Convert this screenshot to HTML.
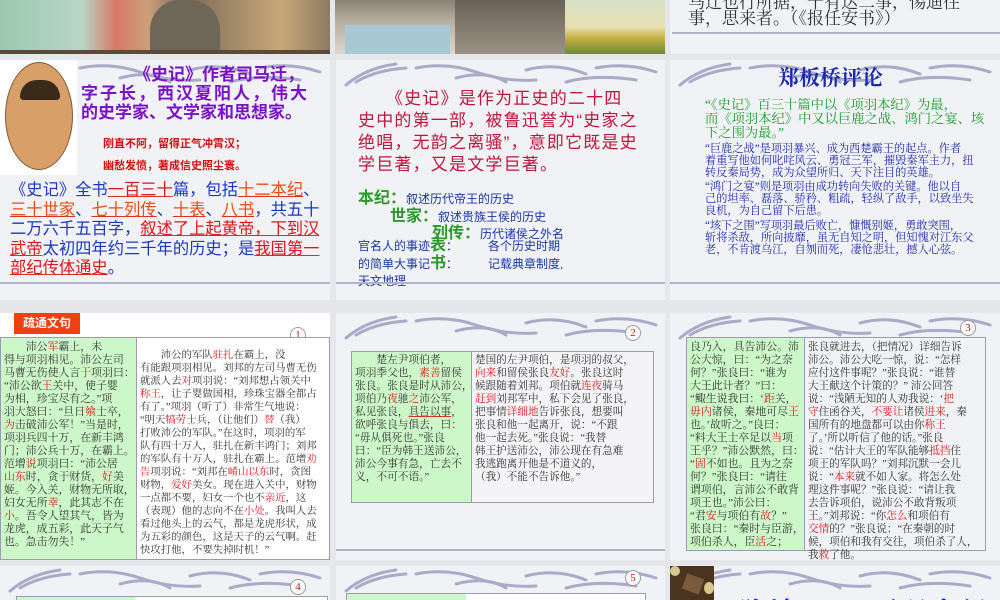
<!DOCTYPE html>
<html><head><meta charset="utf-8"><style>
*{margin:0;padding:0;box-sizing:border-box}
body{width:1000px;height:600px;overflow:hidden;background:#e6e7ea;position:relative;font-family:"Liberation Serif","Noto Serif CJK SC","Noto Sans CJK SC",serif}
.s{position:absolute;overflow:hidden;background:#f1f2f5}
.a{position:absolute;white-space:nowrap}
.k{font-family:"Liberation Sans","Noto Sans CJK SC",sans-serif}
.r{color:#e0141a}
.bx{position:absolute;border:1px solid #9a9ab0}
.t{position:absolute;white-space:nowrap;font-size:10.6px;line-height:13px;color:#333}
.c{position:absolute;width:16px;height:16px;border-radius:50%;border:1px solid #999;background:#fff;color:#d01010;font-size:11px;text-align:center;line-height:14px}
u{text-decoration-color:#e03020}
</style></head><body>
<svg width="0" height="0" style="position:absolute"><defs>
<g id="wv" fill="none" stroke="#a9abc9" stroke-width="3" stroke-linecap="round">
<path d="M10 25 Q30 8 60 4"/><path d="M20 22 Q40 10 70 8"/><path d="M80 8 Q110 2 140 12 T200 20"/><path d="M120 18 Q150 10 170 22"/><path d="M190 10 Q220 2 250 14"/><path d="M230 22 Q260 14 300 20"/><path d="M260 8 Q290 2 320 12"/>
</g></defs></svg>

<!-- row 1 -->
<div class="s" style="left:0;top:0;width:330px;height:54px;background:linear-gradient(90deg,#9cc8b0 0,#b8d6c4 25%,#d87868 35%,#caa07a 45%,#7a6a58 55%,#a08868 70%,#c8a878 85%,#8c7a62 100%)">
<div class="a" style="left:150px;top:0;width:70px;height:54px;background:#6e6656;border-radius:30px 30px 0 0"></div>
<div class="a" style="left:0;top:50px;width:330px;height:4px;background:#5a4a3a"></div></div>
<div class="s" style="left:335px;top:0;width:330px;height:54px;background:linear-gradient(#8a8274,#b8b0a0 40%,#ddd8cc)">
<div class="a" style="left:10px;top:25px;width:105px;height:29px;background:#a8c8d4"></div>
<div class="a" style="left:120px;top:0;width:110px;height:54px;background:linear-gradient(#6a6258,#9a9284)"></div>
<div class="a" style="left:230px;top:0;width:100px;height:54px;background:linear-gradient(#d8e0c8,#e8e0b0 50%,#c8b040 70%,#6a8a3a)"></div></div>
<div class="s" style="left:670px;top:0;width:330px;height:54px">
<div class="a" style="left:18px;top:-12px;font-size:17px;color:#333">马迁也行所据，十有达二事，惕迪往</div>
<div class="a" style="left:18px;top:4px;font-size:17px;color:#333">事，思来者。（《报任安书》）</div>
<div class="a" style="left:2px;top:32px;width:328px;height:2px;background:#b0b2cc"></div></div>

<!-- row 2 col1 -->
<div class="s" style="left:0;top:60px;width:330px;height:240px">
<svg class="a" style="left:0;top:0" width="330" height="30"><use href="#wv"/></svg>
<div class="a" style="left:0;top:0;width:77px;height:115px;background:#fff"></div>
<div class="a" style="left:5px;top:2px;width:68px;height:108px;border-radius:50%;background:#d8a068;border:1px solid #7a5a3a"></div>
<div class="a" style="left:20px;top:20px;width:40px;height:20px;border-radius:20px 20px 4px 4px;background:#3a2a1a"></div>
<div class="a k" style="left:134px;top:0px;font-size:17px;font-weight:bold;color:#7a10c8">《史记》作者司马迁，</div>
<div class="a k" style="left:81px;top:19px;font-size:17px;font-weight:bold;color:#7a10c8;letter-spacing:2px">字子长，西汉夏阳人，伟大</div>
<div class="a k" style="left:81px;top:38px;font-size:17px;font-weight:bold;color:#7a10c8">的史学家、文学家和思想家。</div>
<div class="a k" style="left:103px;top:75px;font-size:11px;font-weight:bold;color:#d01010">刚直不阿，留得正气冲霄汉；</div>
<div class="a k" style="left:103px;top:97px;font-size:11px;font-weight:bold;color:#d01010">幽愁发愤，著成信史照尘寰。</div>
<div class="a k" style="left:10px;top:121px;font-size:16.3px;color:#1836c8;line-height:19.5px">《史记》全书<u class="r">一百三十</u>篇，包括<u style="color:#f04a10">十二本纪</u>、<br><u style="color:#f04a10">三十世家</u>、<u style="color:#f04a10">七十列传</u>、<u style="color:#f04a10">十表</u>、<u style="color:#f04a10">八书</u>，共五十<br>二万六千五百字，<u class="r">叙述了上起黄帝，下到汉</u><br><u class="r">武帝</u>太初四年约三千年的历史；是<u class="r">我国第一</u><br><u class="r">部纪传体通史</u>。</div>
<div class="a" style="left:0;top:222px;width:330px;height:2px;background:#b0b2cc"></div></div>

<!-- row 2 col2 -->
<div class="s" style="left:336px;top:60px;width:329px;height:240px">
<svg class="a" style="left:0;top:0" width="330" height="30"><use href="#wv"/></svg>
<div class="a k" style="left:22px;top:28px;font-size:17px;color:#c0143c;line-height:22px;letter-spacing:1.2px">　　《史记》是作为正史的二十四<br>史中的第一部，被鲁迅誉为“史家之<br>绝唱，无韵之离骚”，意即它既是史<br>学巨著，又是文学巨著。</div>
<div class="a k" style="left:22px;top:124px;font-size:16px;font-weight:bold;color:#2a9a2a">本纪：<span style="font-size:12px;color:#1836a8;font-weight:normal">叙述历代帝王的历史</span></div>
<div class="a k" style="left:54px;top:142px;font-size:16px;font-weight:bold;color:#2a9a2a">世家：<span style="font-size:12px;color:#1836a8;font-weight:normal">叙述贵族王侯的历史</span></div>
<div class="a k" style="left:96px;top:159px;font-size:16px;font-weight:bold;color:#2a9a2a">列传：<span style="font-size:12px;color:#1836a8;font-weight:normal">历代诸侯之外名</span></div>
<div class="a k" style="left:22px;top:177px;font-size:12px;color:#1836a8;line-height:17px">官名人的事迹<b style="font-size:16px;color:#2a9a2a">表</b>：　　　各个历史时期<br>的简单大事记<b style="font-size:16px;color:#2a9a2a">书</b>：　　　记载典章制度,<br>天文地理</div>
<div class="a" style="left:0;top:222px;width:329px;height:2px;background:#b0b2cc"></div></div>

<!-- row 2 col3 -->
<div class="s" style="left:670px;top:60px;width:330px;height:240px">
<svg class="a" style="left:0;top:0" width="330" height="30"><use href="#wv"/></svg>
<div class="a" style="left:108px;top:2px;font-size:21px;font-weight:bold;color:#1a2ab0">郑板桥评论</div>
<div class="a" style="left:35px;top:38px;font-size:13.3px;color:#1a9a2a;line-height:14px">“《史记》百三十篇中以《项羽本纪》为最，<br>而《项羽本纪》中又以巨鹿之战、鸿门之宴、垓<br>下之围为最。”</div>
<div class="a" style="left:35px;top:83px;font-size:11.2px;color:#1a2ab0;line-height:12px">“巨鹿之战”是项羽暴兴、成为西楚霸王的起点。作者<br>着重写他如何叱咤风云、勇冠三军，摧毁秦军主力，扭<br>转反秦局势，成为众望所归、天下注目的英雄。</div>
<div class="a" style="left:35px;top:121px;font-size:11.2px;color:#1a2ab0;line-height:12px">“鸿门之宴”则是项羽由成功转向失败的关键。他以自<br>己的坦率、磊落、骄矜、粗疏，轻纵了敌手，以致坐失<br>良机，为自己留下后患。</div>
<div class="a" style="left:35px;top:160px;font-size:11.2px;color:#1a2ab0;line-height:12px">“垓下之围”写项羽最后败亡，慷慨别姬，勇敢突围，<br>斩将杀敌，所向披靡，虽无自知之明，但知愧对江东父<br>老，不肯渡乌江，自刎而死，凄怆悲壮，撼人心弦。</div>
<div class="a" style="left:0;top:222px;width:330px;height:2px;background:#b0b2cc"></div></div>

<!-- row 3 col1 -->
<div class="s" style="left:0;top:313px;width:330px;height:247px;background:#fff">
<div class="a k" style="left:14px;top:0;width:66px;height:21px;background:#f04010;color:#fff;font-weight:bold;font-size:12px;line-height:21px;text-align:center">疏通文句</div>
<div class="c" style="left:290px;top:14px">1</div>
<div class="bx" style="left:0;top:24px;width:330px;height:223px;background:#fff"></div>
<div class="a" style="left:1px;top:25px;width:136px;height:221px;background:#ccf7c8;border-right:1px solid #9a9ab0"></div>
<div class="t" style="left:4px;top:28px;font-size:10.9px">　　沛公<span class="r">军</span>霸上，未<br>得与项羽相见。沛公左司<br>马曹无伤使人言<span class="r">于</span>项羽曰：<br>“沛公欲<span class="r">王</span>关中，使子婴<br>为相，珍宝尽有之。”项<br>羽大怒曰：“旦日<span class="r">飨</span>士卒，<br><span class="r">为</span>击破沛公军！”当是时，<br>项羽兵四十万，在新丰鸿<br>门；沛公兵十万，在霸上。<br>范增<span class="r">说</span>项羽曰：“沛公居<br><span class="r">山东</span>时，贪于财货，<span class="r">好</span>美<br>姬。今入关，财物无所取，<br>妇女无所<span class="r">幸</span>，此其志不在<br><span class="r">小</span>。吾令人望其气，皆为<br>龙虎，成五彩，此天子气<br>也。急击勿失！”</div>
<div class="t" style="left:140px;top:36px;font-size:10.4px">　　沛公的军队<span class="r">驻扎</span>在霸上，没<br>有能跟项羽相见。刘邦的左司马曹无伤<br>就派人去<span class="r">对</span>项羽说：“刘邦想占领关中<br><span class="r">称王</span>，让子婴做国相，珍珠宝器全都占<br>有了。”项羽（听了）非常生气地说：<br>“明天<span class="r">犒劳</span>士兵，（让他们）<span class="r">替</span>（我）<br>打败沛公的军队。”在这时，项羽的军<br>队有四十万人，驻扎在新丰鸿门；刘邦<br>的军队有十万人，驻扎在霸上。范增<span class="r">劝</span><br><span class="r">告</span>项羽说：“刘邦在<span class="r">崤山以东</span>时，贪图<br>财物，<span class="r">爱好</span>美女。现在进入关中，财物<br>一点都不要，妇女一个也不<span class="r">亲近</span>，这<br>（表现）他的志向不在<span class="r">小处</span>。我叫人去<br>看过他头上的云气，都是龙虎形状，成<br>为五彩的颜色，这是天子的云气啊。赶<br>快攻打他，不要失掉时机！”</div>
</div>

<!-- row 3 col2 -->
<div class="s" style="left:336px;top:313px;width:329px;height:247px">
<svg class="a" style="left:0;top:0" width="330" height="30"><use href="#wv"/></svg>
<div class="c" style="left:289px;top:12px">2</div>
<div class="bx" style="left:15px;top:38px;width:303px;height:152px;background:#f4f4f6"></div>
<div class="a" style="left:16px;top:39px;width:120px;height:150px;background:#ccf7c8;border-right:1px solid #9a9ab0"></div>
<div class="t" style="left:19px;top:41px;font-size:10.7px">　　楚左尹项伯者，<br>项羽季父也，<span class="r">素善</span>留侯<br>张良。张良是时从沛公，<br>项伯乃<span class="r">夜</span>驰<span class="r">之</span>沛公军，<br>私见张良，<u class="r" style="color:#333">具告以事</u>，<br>欲呼张良与俱去，曰：<br>“毋从俱死也。”张良<br>曰：“臣为韩王送沛公，<br>沛公今事有急，亡去不<br>义，不可不语。”</div>
<div class="t" style="left:139px;top:41px;font-size:10.6px">楚国的左尹项伯，是项羽的叔父，<br><span class="r">向来</span>和留侯张良<span class="r">友好</span>。张良这时<br>候跟随着刘邦。项伯就<span class="r">连夜</span>骑马<br><span class="r">赶到</span>刘邦军中，私下会见了张良，<br>把事情<span class="r">详细地</span>告诉张良，想要叫<br>张良和他一起离开，说：“不跟<br>他一起去死。”张良说：“我替<br>韩王护送沛公，沛公现在有急难<br>我逃跑离开他是不道义的，<br>（我）不能不告诉他。”</div>
<div class="a" style="left:0;top:236px;width:329px;height:2px;background:#b0b2cc"></div></div>

<!-- row 3 col3 -->
<div class="s" style="left:670px;top:313px;width:330px;height:247px">
<svg class="a" style="left:0;top:0" width="330" height="30"><use href="#wv"/></svg>
<div class="c" style="left:290px;top:7px">3</div>
<div class="bx" style="left:16px;top:24px;width:300px;height:214px"></div>
<div class="a" style="left:17px;top:25px;width:118px;height:212px;background:#ccf7c8;border-right:1px solid #9a9ab0"></div>
<div class="t" style="left:20px;top:28px;font-size:10.9px">良乃入，具告沛公。沛<br>公大惊，曰：“为之奈<br>何？”张良曰：“谁为<br>大王此计者？”曰：<br>“鲰生说我曰：‘<span class="r">距</span>关，<br><span class="r">毋内</span>诸侯，秦地可尽<span class="r">王</span><br>也。’故听之。”良曰：<br>“料大王士卒足以<span class="r">当</span>项<br>王乎？”沛公默然，曰：<br>“<span class="r">固</span>不如也。且为之奈<br>何？”张良曰：“请往<br>谓项伯，言沛公不敢背<br>项王也。”沛公曰：<br>“君<span class="r">安</span>与项伯有<span class="r">故</span>？”<br>张良曰：“秦时与臣游，<br>项伯杀人，臣<span class="r">活</span>之；</div>
<div class="t" style="left:138px;top:28px;font-size:10.6px">张良就进去，（把情况）详细告诉<br>沛公。沛公大吃一惊，说：“怎样<br>应付这件事呢？”张良说：“谁替<br>大王献这个计策的？” 沛公回答<br>说：“浅陋无知的人劝我说：‘<span class="r">把</span><br><span class="r">守</span>住函谷关，<span class="r">不要让</span>诸侯<span class="r">进来</span>，秦<br>国所有的地盘都可以由你<span class="r">称王</span><br>了。’所以听信了他的话。”张良<br>说：“估计大王的军队能够<span class="r">抵挡</span>住<br>项王的军队吗？”刘邦沉默一会儿<br>说：“<span class="r">本来</span>就不如人家。将怎么处<br>理这件事呢？”张良说：“请让我<br>去告诉项伯，说沛公不敢背叛项<br>王。”刘邦说：“你<span class="r">怎么</span>和项伯有<br><span class="r">交情</span>的？”张良说：“在秦朝的时<br>候，项伯和我有交往，项伯杀了人，<br>我<span class="r">救</span>了他。</div></div>

<!-- row 4 -->
<div class="s" style="left:0;top:566px;width:330px;height:34px">
<svg class="a" style="left:0;top:0" width="330" height="30"><use href="#wv"/></svg>
<div class="c" style="left:290px;top:13px">4</div>
<div class="a" style="left:16px;top:30px;width:312px;height:6px;border:1px solid #9a9ab0;background:linear-gradient(90deg,#ccf7c8 38%,#fff 38%)"></div></div>
<div class="s" style="left:336px;top:566px;width:329px;height:34px">
<svg class="a" style="left:0;top:0" width="330" height="30"><use href="#wv"/></svg>
<div class="c" style="left:289px;top:4px">5</div>
<div class="a" style="left:10px;top:27px;width:300px;height:9px;border:1px solid #9a9ab0;background:linear-gradient(90deg,#ccf7c8 40%,#fff 40%)"></div></div>
<div class="s" style="left:670px;top:566px;width:330px;height:34px">
<svg class="a" style="left:0;top:0" width="330" height="30"><use href="#wv"/></svg>
<div class="a" style="left:0;top:0;width:44px;height:34px;background:#4a3420"></div>
<div class="a" style="left:14px;top:10px;width:18px;height:16px;background:#7a5a3a;transform:rotate(20deg)"></div>
<div class="a" style="left:0;top:0;width:10px;height:10px;border-radius:50%;background:#d8c890"></div>
<div class="a" style="left:34px;top:16px;width:10px;height:12px;border-radius:50%;background:#d8c890"></div>
<div class="a" style="left:70px;top:26px;font-size:26px;font-weight:bold;color:#1a2ab0;letter-spacing:4px">陈涉　　 项羽本纪</div></div>
</body></html>
